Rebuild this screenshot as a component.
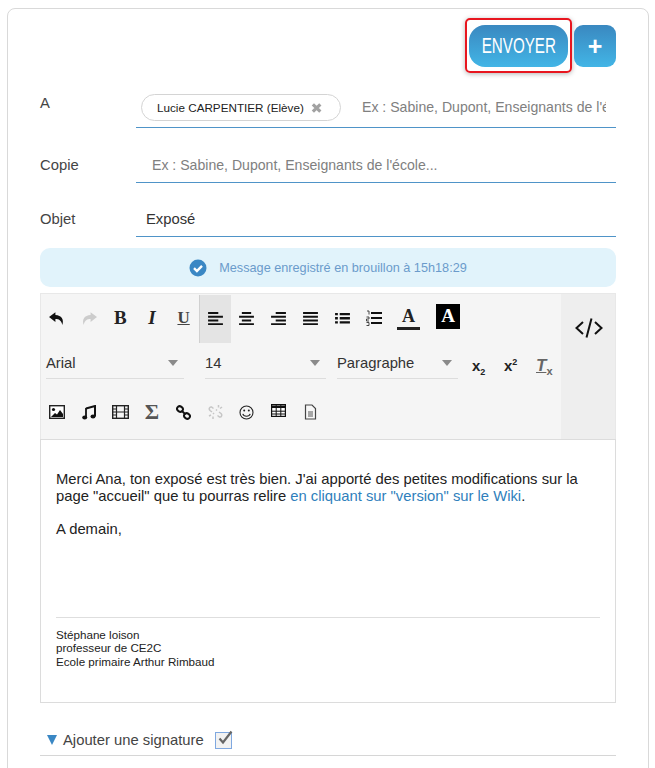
<div class="page">
	<div class="card">
		<div class="actions">
			<div class="send-wrap"><button class="send"><span>ENVOYER</span></button></div>
			<button class="plus">+</button>
		</div>

		<div class="row row-a">
			<div class="label">A</div>
			<div class="field">
				<span class="chip">Lucie CARPENTIER (Elève)
					<svg width="12" height="12" viewBox="0 0 12 12"><path d="M2 2l8 8M10 2l-8 8" stroke="#a2a2a2" stroke-width="3.4"/></svg>
				</span>
				<span class="placeholder clip">Ex : Sabine, Dupont, Enseignants de l'école...</span>
			</div>
		</div>
		<div class="row row-copie">
			<div class="label">Copie</div>
			<div class="field"><span class="placeholder">Ex : Sabine, Dupont, Enseignants de l'école...</span></div>
		</div>
		<div class="row row-objet">
			<div class="label">Objet</div>
			<div class="field"><span class="value">Exposé</span></div>
		</div>

		<div class="notice">
			<svg width="18" height="18" viewBox="0 0 18 18"><circle cx="9" cy="9" r="8.500" fill="#3a87c4"/><path d="M5 9.200l2.900 2.800L13 6.800" fill="none" stroke="#fff" stroke-width="2.400"/></svg>
			<span>Message enregistré en brouillon à 15h18:29</span>
		</div>

		<div class="toolbar">
			<div class="tools">
				<div class="tool-row first">
					<i class="btn"><svg width="18" height="17" viewBox="0 0 16 16"><path d="M6.500 2L.5 6.700l6 4.600V8.500c3.200 0 5.500 1 6.500 5.500 1.800-5-.7-9-6.500-9.300z" fill="#111"/></svg></i>
					<i class="btn"><svg width="18" height="17" viewBox="0 0 16 16"><path d="M9.500 2l6 4.700-6 4.600V8.500c-3.200 0-5.500 1-6.500 5.500-1.800-5 .7-9 6.500-9.300z" fill="#ccc"/></svg></i>
					<i class="btn glyph serif b">B</i>
					<i class="btn glyph serif it">I</i>
					<i class="btn glyph serif un">U</i>
					<i class="btn active"><svg width="15" height="13" viewBox="0 0 16 14"><path d="M0 0h11v2.200H0zM0 4h16v2.200H0zM0 8h11v2.200H0zM0 12h16v2H0z" fill="#111"/></svg></i>
					<i class="btn"><svg width="15" height="13" viewBox="0 0 16 14"><path d="M3 0h10v2.200H3zM0 4h16v2.200H0zM3 8h10v2.200H3zM0 12h16v2H0z" fill="#111"/></svg></i>
					<i class="btn"><svg width="15" height="13" viewBox="0 0 16 14"><path d="M5 0h11v2.200H5zM0 4h16v2.200H0zM5 8h11v2.200H5zM0 12h16v2H0z" fill="#111"/></svg></i>
					<i class="btn"><svg width="15" height="13" viewBox="0 0 16 14"><path d="M0 0h16v2.200H0zM0 4h16v2.200H0zM0 8h16v2.200H0zM0 12h16v2H0z" fill="#111"/></svg></i>
					<i class="btn"><svg width="15" height="13" viewBox="0 0 16 14"><path d="M0 1h3v2.500H0zM5 1h11v2.500H5zM0 5.500h3V8H0zM5 5.500h11V8H5zM0 10h3v2.500H0zM5 10h11v2.500H5z" fill="#111"/></svg></i>
					<i class="btn"><svg width="16" height="16" viewBox="0 0 16 16"><path d="M5 2h11v2H5zM5 7h11v2H5zM5 12h11v2H5z" fill="#111"/><path d="M1 1h2v3.500M.5 7h2.500v2H.5v2h2.500M.5 12.500h2.500v3H.5" fill="none" stroke="#333" stroke-width=".9"/></svg></i>
					<i class="btn text-color"><span>A</span><b></b></i>
					<i class="btn back-color"><span>A</span></i>
				</div>
				<div class="tool-row second">
					<div class="select s-font"><span>Arial</span><u></u></div>
					<div class="select s-size"><span>14</span><u></u></div>
					<div class="select s-format"><span>Paragraphe</span><u></u></div>
					<i class="script">x<sub>2</sub></i>
					<i class="script">x<sup>2</sup></i>
					<i class="script clear"><em>T</em><sub>x</sub></i>
				</div>
				<div class="tool-row third">
					<i class="btn"><svg width="16" height="14" viewBox="0 0 16 14"><rect x=".7" y=".7" width="14.600" height="12.600" fill="#fff" stroke="#222" stroke-width="1.400"/><circle cx="4.500" cy="4.500" r="1.600" fill="#111"/><path d="M2 12l4-4 2 1.500L11 5l3 4v3z" fill="#111"/></svg></i>
					<i class="btn"><svg width="14" height="15" viewBox="0 0 14 15"><path d="M4 3.500L13 1v10.500" fill="none" stroke="#111" stroke-width="2"/><path d="M4 3v9.500" stroke="#111" stroke-width="1.800"/><ellipse cx="2.700" cy="12.500" rx="2.500" ry="2" fill="#111"/><ellipse cx="11" cy="11.500" rx="2.500" ry="2" fill="#111"/></svg></i>
					<i class="btn"><svg width="17" height="14" viewBox="0 0 17 14"><rect x=".7" y=".7" width="15.600" height="12.600" fill="none" stroke="#222" stroke-width="1.400"/><path d="M4.500 1v12M12.500 1v12M1 7h15M1 4h3M1 10h3M13 4h3M13 10h3" stroke="#222" stroke-width="1.200"/></svg></i>
					<i class="btn glyph serif sigma">Σ</i>
					<i class="btn"><svg width="15" height="15" viewBox="0 0 15 15"><g fill="none" stroke="#111" stroke-width="2"><ellipse cx="4" cy="4" rx="3" ry="2.600" transform="rotate(35 4 4)"/><ellipse cx="11" cy="11" rx="3" ry="2.600" transform="rotate(35 11 11)"/><path d="M5.500 5.500l4 4"/></g></svg></i>
					<i class="btn"><svg width="15" height="16" viewBox="0 0 15 16"><g fill="none" stroke="#c6c6c6" stroke-width="1.500"><path d="M5.500 4.500L3.500 3C1.500 2.500.5 5 2 6.500l2 1.500M9.500 11.500l2 1.500c2 .5 3-2 1.500-3.500l-2-1.500M6 10l-1-1M9 6.500L8 5.500M10.500 1v2.500M14 3l-2 1.500M1 12l2-1M5 15v-2.500"/></g></svg></i>
					<i class="btn"><svg width="15" height="15" viewBox="0 0 15 15"><circle cx="7.500" cy="7.500" r="6.500" fill="none" stroke="#222" stroke-width="1.100"/><circle cx="5.200" cy="5.600" r="1" fill="#222"/><circle cx="9.800" cy="5.600" r="1" fill="#222"/><path d="M3.800 8.800c1 3.200 6.400 3.200 7.400 0" fill="none" stroke="#222" stroke-width="1.100"/></svg></i>
					<i class="btn up"><svg width="15" height="13" viewBox="0 0 15 13"><rect x=".6" y=".6" width="13.800" height="11.800" fill="#fff" stroke="#111" stroke-width="1.200"/><path d="M.6 1.500h13.800v2.500H.6z" fill="#111"/><path d="M5.200 1v11M9.800 1v11M1 7.200h13M1 10h13" stroke="#111"/></svg></i>
					<i class="btn"><svg width="13" height="16" viewBox="0 0 13 16"><path d="M1.500 1h6.500l3.500 3.500V15h-10z" fill="#f7f7f7" stroke="#444" stroke-width="1.200"/><path d="M4 8h5M4 10h5M4 12h5" stroke="#555"/></svg></i>
				</div>
			</div>
			<div class="source">
				<svg width="28" height="22" viewBox="0 0 28 22"><path d="M8 5l-6.500 6L8 17M20 5l6.500 6L20 17M16.500 1.500L11.500 20.500" fill="none" stroke="#111" stroke-width="2"/></svg>
			</div>
		</div>

		<div class="editor">
			<p>Merci Ana, ton exposé est très bien. J'ai apporté des petites modifications sur la page "accueil" que tu pourras relire <a href="#wiki">en cliquant sur "version" sur le Wiki</a>.</p>
			<p class="bye">A demain,</p>
			<div class="signature">Stéphane loison<br />professeur de CE2C<br />Ecole primaire Arthur Rimbaud</div>
		</div>

		<div class="sign-row">
			<span class="tri"></span>
			<span>Ajouter une signature</span>
			<span class="check">
				<svg width="18" height="18" viewBox="0 0 18 18"><path d="M3.500 8.500l3.500 4L15.500 1.500" fill="none" stroke="#666" stroke-width="2.200"/></svg>
			</span>
		</div>
	</div>
</div>

<style>
	:global(body) {
		margin: 0;
		background: #fff;
	}

	.page {
		height: 768px;
		overflow: hidden;
		padding: 8px 6px 0 7px;
		box-sizing: border-box;
		font-family: "Liberation Sans", Arial, sans-serif;
		color: #333;
	}

	.card {
		border: 1px solid #d9d9d9;
		border-radius: 8px;
		height: 800px;
		padding: 9px 32px 0;
		box-sizing: border-box;
	}

	.actions {
		display: flex;
		justify-content: flex-end;
		align-items: flex-start;
		gap: 2px;
		height: 56px;
	}

	.send-wrap {
		border: 2px solid #e8161f;
		border-radius: 5px;
		padding: 5px 2px 4px;
		box-shadow: 0 1px 5px rgba(0, 0, 0, .3);
	}

	.send, .plus {
		border: 0;
		padding: 0;
		display: block;
		color: #fff;
		font-family: "Liberation Sans", Arial, sans-serif;
		background: linear-gradient(#3a88c0, #42b5e6);
	}

	.send {
		width: 99px;
		height: 42px;
		border-radius: 16px;
		font-size: 22px;
		display: flex;
		align-items: center;
		justify-content: center;
	}

	.send span {
		display: inline-block;
		flex: none;
		transform: scaleX(.69);
	}

	.plus {
		width: 42px;
		height: 42px;
		margin-top: 7px;
		border-radius: 9px;
		font-size: 25px;
		font-weight: bold;
	}

	.row {
		display: flex;
	}

	.label {
		width: 96px;
		flex: none;
		font-size: 14.800px;
		color: #444;
	}

	.field {
		flex: 1;
		min-width: 0;
		display: flex;
		align-items: center;
		border-bottom: 1px solid #4f94c8;
		font-size: 14.100px;
		box-sizing: border-box;
	}

	.row-a {
		height: 54px;
	}

	.row-a .label {
		padding-top: 21px;
	}

	.row-a .field {
		padding: 0 10px 6px 5px;
		align-items: flex-end;
	}

	.chip {
		display: inline-flex;
		align-items: center;
		justify-content: space-between;
		flex: none;
		gap: 7px;
		width: 200px;
		height: 27px;
		padding: 0 18px 0 15px;
		margin-right: 21px;
		box-sizing: border-box;
		border: 1px solid #d4d4d4;
		border-radius: 14px;
		font-size: 11.700px;
		color: #222;
		white-space: nowrap;
	}

	.placeholder {
		color: #808080;
		white-space: nowrap;
	}

	.clip {
		flex: 1;
		min-width: 0;
		overflow: hidden;
		line-height: 27px;
	}

	.row-copie {
		height: 36px;
		margin-top: 19px;
		align-items: stretch;
	}

	.row-copie .label {
		padding-top: 10px;
	}

	.row-copie .field {
		padding: 0 16px;
	}

	.row-objet {
		height: 36px;
		margin-top: 18px;
	}

	.row-objet .label {
		padding-top: 10px;
	}

	.row-objet .field {
		padding: 0 10px;
		font-size: 14.800px;
	}

	.value {
		color: #333;
	}

	.notice {
		margin-top: 11px;
		height: 39px;
		display: flex;
		align-items: center;
		justify-content: center;
		gap: 12px;
		background: #e1f3fb;
		border-radius: 10px;
		font-size: 12.700px;
		color: #6b9bcb;
	}

	.toolbar {
		margin-top: 6px;
		height: 146px;
		display: flex;
		background: #f5f5f5;
		border: 1px solid #e8e8e8;
		border-bottom: 0;
		box-sizing: border-box;
	}

	.tools {
		flex: 1;
		min-width: 0;
	}

	.source {
		width: 54px;
		flex: none;
		background: #eeeeee;
		display: flex;
		justify-content: center;
		padding: 23px 0 0 1px;
		box-sizing: border-box;
	}

	.source svg {
		display: block;
	}

	.tool-row {
		display: flex;
		align-items: center;
	}

	.first {
		height: 48px;
		margin-top: 1px;
	}

	.second {
		height: 42px;
		align-items: flex-start;
		padding-left: 5px;
	}

	.third {
		height: 54px;
		padding-top: 2px;
		box-sizing: border-box;
	}

	.btn {
		width: 31.700px;
		height: 48px;
		flex: none;
		display: flex;
		align-items: center;
		justify-content: center;
		font-style: normal;
		padding-bottom: 2px;
		box-sizing: border-box;
	}

	.third .btn {
		height: 50px;
	}

	.up {
		padding-bottom: 6px;
	}

	.active {
		background: #e4e4e4;
		border-left: 1px solid #d0d0d0;
	}

	.glyph {
		color: #222;
	}

	.serif {
		font-family: "Liberation Serif", "Times New Roman", serif;
		font-size: 19px;
	}

	.b {
		font-weight: bold;
	}

	.it {
		font-weight: bold;
		font-style: italic;
	}

	.un {
		text-decoration: underline;
		font-size: 17px;
		font-weight: bold;
		color: #444;
	}

	.sigma {
		font-size: 22px;
		color: #555;
		font-weight: bold;
	}

	.text-color {
		flex-direction: column;
		font-family: "Liberation Serif", serif;
		font-weight: bold;
		font-size: 18px;
		line-height: 18px;
		color: #222;
		margin-left: 3px;
	}

	.text-color b {
		display: block;
		width: 23px;
		height: 3px;
		background: #222;
		margin-top: 2px;
	}

	.back-color {
		margin-left: 8px;
		padding-bottom: 6px;
	}

	.back-color span {
		display: flex;
		align-items: center;
		justify-content: center;
		width: 24px;
		height: 25px;
		background: #000;
		color: #fff;
		font-family: "Liberation Serif", serif;
		font-weight: bold;
		font-size: 19px;
	}

	.select {
		height: 36px;
		flex: none;
		display: flex;
		align-items: center;
		justify-content: space-between;
		border-bottom: 1px solid #ddd;
		box-sizing: border-box;
		font-size: 14.800px;
		color: #333;
		padding: 4px 6px 0 0;
	}

	.select u {
		display: block;
		width: 0;
		height: 0;
		border-left: 5.500px solid transparent;
		border-right: 5.500px solid transparent;
		border-top: 6px solid #8a8a8a;
	}

	.s-font {
		width: 138px;
		margin-right: 21px;
	}

	.s-size {
		width: 121px;
		margin-right: 11px;
	}

	.s-format {
		width: 121px;
		margin-right: 14px;
	}

	.script {
		width: 32px;
		flex: none;
		font-style: normal;
		font-weight: bold;
		font-size: 15px;
		line-height: 36px;
		color: #222;
		margin-top: 5px;
	}

	.script sub, .script sup {
		font-size: 9px;
		line-height: 0;
	}

	.clear {
		color: #666;
		font-size: 17px;
	}

	.clear em {
		text-decoration: underline;
		font-style: italic;
	}

	.clear sub {
		font-size: 11px;
	}

	.editor {
		height: 264px;
		border: 1px solid #dcdcdc;
		padding: 31px 15px 0;
		box-sizing: border-box;
		font-size: 14.800px;
		line-height: 17px;
		color: #222;
	}

	.editor p {
		margin: 0;
	}

	.editor a {
		color: #2f7fbc;
		text-decoration: none;
	}

	.bye {
		margin-top: 16px !important;
	}

	.signature {
		margin-top: 79px;
		border-top: 1px solid #dedede;
		padding-top: 10px;
		font-size: 11.650px;
		line-height: 13.300px;
	}

	.sign-row {
		margin-top: 24px;
		height: 29px;
		display: flex;
		align-items: center;
		padding: 0 0 2px 7px;
		border-bottom: 1px solid #d6d6d6;
		box-sizing: border-box;
		font-size: 14.800px;
		color: #444;
	}

	.tri {
		width: 0;
		height: 0;
		margin-right: 6px;
		border-left: 5px solid transparent;
		border-right: 5px solid transparent;
		border-top: 10px solid #3a87c4;
	}

	.check {
		position: relative;
		width: 15px;
		height: 15px;
		margin-left: 11px;
		border: 1px solid #7fa8e0;
		background: #f2f2f2;
	}

	.check svg {
		position: absolute;
		left: 0;
		top: -3px;
	}
</style>
